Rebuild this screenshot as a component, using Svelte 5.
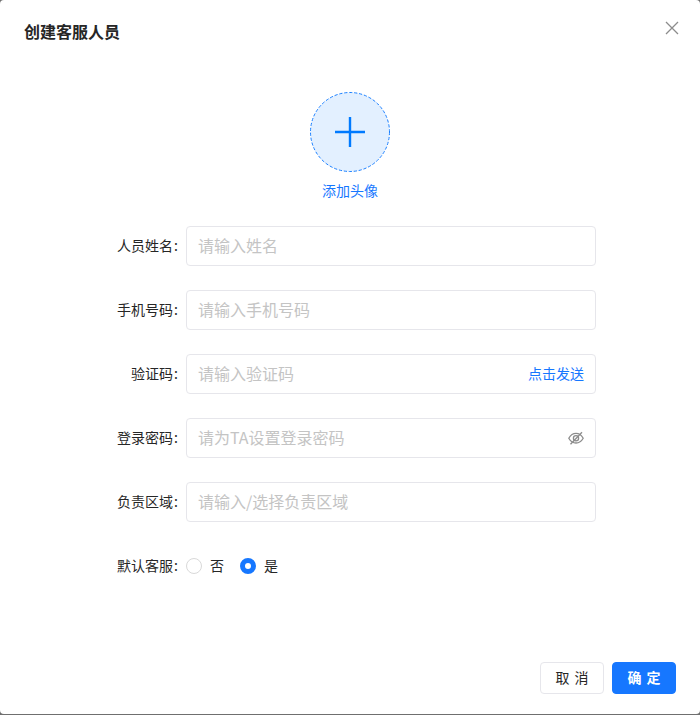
<script lang="ts">
  type Field = { label: string; placeholder: string; suffix?: "send" | "eye" };

  const fields: Field[] = [
    { label: "人员姓名", placeholder: "请输入姓名" },
    { label: "手机号码", placeholder: "请输入手机号码" },
    { label: "验证码", placeholder: "请输入验证码", suffix: "send" },
    { label: "登录密码", placeholder: "请为TA设置登录密码", suffix: "eye" },
    { label: "负责区域", placeholder: "请输入/选择负责区域" },
  ];

  let isDefault = $state(true);
</script>

<div class="modal">
  <header class="header">
    <h2 class="title">创建客服人员</h2>
    <button class="close" aria-label="关闭">
      <svg width="14" height="14" viewBox="0 0 14 14" fill="none" stroke="#8c8c8c" stroke-width="1.3">
        <path d="M1 1l12 12M13 1L1 13" />
      </svg>
    </button>
  </header>

  <div class="body">
    <div class="avatar-wrap">
      <button class="avatar" aria-label="添加头像">
        <svg width="80" height="80" viewBox="0 0 80 80" fill="none">
          <circle cx="40" cy="40" r="39.500" fill="#e3f0ff" stroke="#1b80ff" stroke-dasharray="3.200 1.800" />
          <path d="M40 25v30M25 40h30" stroke="#007aff" stroke-width="2.400" />
        </svg>
      </button>
      <span class="avatar-text">添加头像</span>
    </div>

    <form class="form">
      {#each fields as field}
        <div class="row">
          <label class="label" for={field.label}>{field.label}<span class="colon">:</span></label>
          <div class="input-box">
            <input id={field.label} class="input" placeholder={field.placeholder} />
            {#if field.suffix === "send"}
              <span class="send">点击发送</span>
            {:else if field.suffix === "eye"}
              <svg class="eye" width="16" height="16" viewBox="0 0 16 16" fill="none" stroke="#8c8c8c" stroke-width="1.3">
                <path d="M.8 8.200C2.600 5 5 3.400 8 3.400s5.400 1.600 7.200 4.800c-1.800 3.200-4.200 4.800-7.200 4.800S2.600 11.400.8 8.200z" />
                <circle cx="8" cy="8.200" r="2.600" />
                <path d="M14 2.200L2.500 14.200" />
              </svg>
            {/if}
          </div>
        </div>
      {/each}

      <div class="row radio-row">
        <span class="label">默认客服<span class="colon">:</span></span>
        <div class="radios">
          <label class="radio">
            <input type="radio" name="default" checked={!isDefault} onchange={() => (isDefault = false)} />
            <span class="dot"></span>
            <span class="radio-text">否</span>
          </label>
          <label class="radio">
            <input type="radio" name="default" checked={isDefault} onchange={() => (isDefault = true)} />
            <span class="dot"></span>
            <span class="radio-text">是</span>
          </label>
        </div>
      </div>
    </form>
  </div>

  <footer class="footer">
    <button class="btn"><span class="btn-text">取 消</span></button>
    <button class="btn primary"><span class="btn-text">确 定</span></button>
  </footer>
</div>

<style>
  :global(body) {
    background: #6f6f6f;
    font-family: "Noto Sans CJK SC", "Liberation Sans", sans-serif;
  }

  .modal {
    width: 700px;
    height: 714px;
    background: #fff;
    border-radius: 4px;
    display: flex;
    flex-direction: column;
    color: #262626;
  }

  .header {
    display: flex;
    justify-content: space-between;
    align-items: flex-start;
    padding: 19px 21px 0 24px;
    height: 72px;
    box-sizing: border-box;
  }

  .title {
    margin: 0;
    font-size: 16px;
    line-height: 24px;
    font-weight: 700;
  }

  .close {
    border: 0;
    padding: 0;
    background: none;
    display: flex;
    height: 14px;
    margin-top: 2px;
  }

  .body {
    flex: 1;
    display: flex;
    flex-direction: column;
  }

  .avatar-wrap {
    display: flex;
    flex-direction: column;
    align-items: center;
    margin-top: 20px;
  }

  .avatar {
    width: 80px;
    height: 80px;
    border: 0;
    background: none;
    padding: 0;
    display: flex;
  }

  .avatar-text {
    margin: 7px 0 1px;
    font-size: 14px;
    line-height: 22px;
    color: #1677ff;
  }

  .form {
    margin-top: 24px;
    display: flex;
    flex-direction: column;
    gap: 24px;
  }

  .row {
    display: flex;
    align-items: center;
    height: 40px;
  }

  .label {
    width: 186px;
    box-sizing: border-box;
    padding: 0 8px 2px 0;
    text-align: right;
    font-size: 14px;
    color: #262626;
  }

  .colon {
    margin-left: 1px;
  }

  .input-box {
    width: 410px;
    height: 40px;
    box-sizing: border-box;
    border: 1px solid #e6e6eb;
    border-radius: 4px;
    display: flex;
    align-items: center;
    padding: 0 11px;
  }

  .input {
    flex: 1;
    min-width: 0;
    border: 0;
    outline: 0;
    padding: 0 0 2px;
    font: inherit;
    font-size: 16px;
  }

  .input::placeholder {
    color: #c4c4c4;
  }

  .send {
    padding-bottom: 2px;
    font-size: 14px;
    color: #1677ff;
  }

  .radios {
    display: flex;
    gap: 16px;
  }

  .radio {
    display: flex;
    align-items: center;
    gap: 8px;
    font-size: 14px;
  }

  .radio-text {
    padding-bottom: 2px;
  }

  .radio input {
    display: none;
  }

  .dot {
    width: 16px;
    height: 16px;
    box-sizing: border-box;
    border: 1px solid #d9d9d9;
    border-radius: 50%;
  }

  .radio input:checked + .dot {
    border: 5px solid #1677ff;
  }

  .footer {
    display: flex;
    justify-content: flex-end;
    gap: 8px;
    padding: 0 24px 20px;
  }

  .btn {
    width: 64px;
    height: 32px;
    box-sizing: border-box;
    border: 1px solid #e6e6eb;
    border-radius: 4px;
    background: #fff;
    color: #262626;
    font: inherit;
    font-size: 14px;
    padding: 0 0 2px;
  }

  .btn-text {
    letter-spacing: 1px;
    margin-right: -1px;
  }

  .btn.primary {
    background: #1677ff;
    border-color: #1677ff;
    color: #fff;
    font-weight: 700;
  }
</style>
